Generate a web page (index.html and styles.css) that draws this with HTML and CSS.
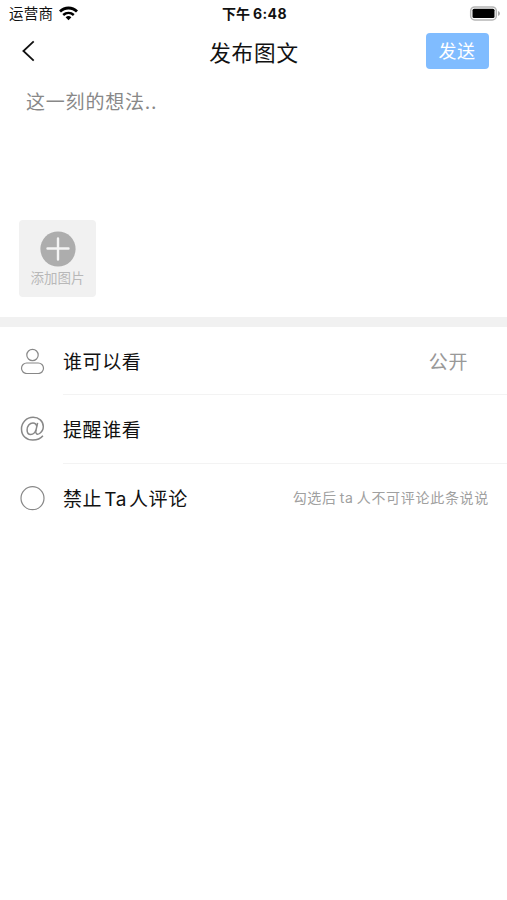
FILE: index.html
```
<!DOCTYPE html>
<html lang="zh-CN">
<head>
  <meta charset="UTF-8">
  <meta name="viewport" content="width=device-width, initial-scale=1">
  <title>发布图文</title>
  <link rel="stylesheet" href="styles.css">
</head>
<body>

  <div class="status">
    <div class="carrier">
      <span>运营商</span>
      <svg class="wifi" width="19" height="15" viewBox="0 0 19 15">
        <path d="M1 5.600C5.800.8 13.200.8 18 5.600" fill="none" stroke="#000" stroke-width="2.800"/>
        <path d="M4.200 9C7.300 6.200 11.700 6.200 14.800 9" fill="none" stroke="#000" stroke-width="2.500"/>
        <path d="M6.600 11.200Q9.500 8.900 12.400 11.200L9.500 14.200Z"/>
      </svg>
    </div>
    <div class="clock">下午<span>6:48</span></div>
    <svg class="battery" width="31" height="16" viewBox="0 0 31 16">
      <rect x="1.700" y=".900" width="25.600" height="13" rx="4" fill="#fff" stroke="#b5b5b5" stroke-width="1.500"/>
      <rect x="3.500" y="2.700" width="22" height="9.400" rx="1.500"/>
      <path d="M29 5Q31 5.700 31 7.400T29 9.900Z" fill="#aaa"/>
    </svg>
  </div>

  <header class="nav">
    <svg class="back" width="14" height="22" viewBox="0 0 14 22">
      <path d="M12.700 1.300L2.400 11L12.700 20.700" fill="none" stroke="#111" stroke-width="1.800"/>
    </svg>
    <h1>发布图文</h1>
    <button class="send">发送</button>
  </header>

  <div class="editor">
    <div class="placeholder">这一刻的想法..</div>
    <div class="add">
      <svg width="36" height="36" viewBox="0 0 36 36">
        <circle cx="18" cy="18" r="17.600" fill="#adadad"/>
        <path d="M18 7.500V28.500M7.500 17.500H28.500" stroke="#f4f4f4" stroke-width="2.400" stroke-linecap="round"/>
      </svg>
      <span>添加图片</span>
    </div>
  </div>

  <ul class="options">
    <li>
      <svg class="icon" width="26" height="26" viewBox="0 0 26 26">
        <circle cx="12.500" cy="7" r="5.700"/>
        <rect x="1.500" y="15" width="22" height="10.500" rx="5.250"/>
      </svg>
      <div class="cell">
        <span>谁可以看</span>
        <span class="value">公开</span>
      </div>
    </li>
    <li>
      <svg class="icon at" width="26" height="26" viewBox="0 0 26 26">
        <path d="M17.600 6.900L15.800 15.200C15.200 18.500 17.800 18.700 19.600 17.500C22.100 15.800 23.300 13.300 23.300 10.600C23.300 5 18.800 1.300 13.100 1.300C6.500 1.300 1.500 6.400 1.500 12.900C1.500 19.600 6.200 24 12.800 24C17 24 20.700 22.500 22.900 19.700"/>
        <path d="M16.700 10.400C16.300 8.100 15 6.900 13 6.900C9.500 6.900 7.100 10.400 7.100 13.900C7.100 16.700 8.500 18.400 10.700 18.400C13.200 18.400 15.200 16.300 15.900 13.900"/>
      </svg>
      <div class="cell">
        <span>提醒谁看</span>
      </div>
    </li>
    <li>
      <svg class="icon" width="26" height="26" viewBox="0 0 26 26">
        <circle cx="12.500" cy="13.200" r="11.500"/>
      </svg>
      <div class="cell">
        <span>禁止<span class="latin">Ta</span>人评论</span>
        <span class="hint">勾选后<span class="latin">ta</span>人不可评论此条说说</span>
      </div>
    </li>
  </ul>

</body>
</html>
```

FILE: styles.css
```
body {
  background: white;
  font-family: Inter, "Noto Sans CJK SC", sans-serif;
  margin: 0;
  color: #111;
}

.status {
  display: grid;
  grid-template-columns: 1fr auto 1fr;
  align-items: center;
  height: 27px;
  padding: 0 7px 0 9px;
}

.carrier {
  display: flex;
  align-items: center;
  gap: 6px;
  font-size: 14.5px;
  line-height: 26px;
  letter-spacing: 0.3px;
}

.wifi {
  margin-bottom: 1px;
}

.clock {
  font-size: 14px;
  font-weight: bold;
  line-height: 26px;
}

.clock span {
  margin-left: 3px;
  letter-spacing: 0.4px;
}

.battery {
  justify-self: end;
}

.nav {
  display: grid;
  grid-template-columns: 1fr auto 1fr;
  align-items: center;
  height: 48px;
  padding: 0 18px 0 21px;
}

h1 {
  margin: 3px 2px 0 0;
  font-size: 21.6px;
  font-weight: normal;
  line-height: 32px;
  letter-spacing: 0.8px;
}

.send {
  justify-self: end;
  width: 63px;
  height: 36px;
  padding: 0 1px 2px 0;
  border: none;
  border-radius: 4px;
  background: #80bcff;
  color: white;
  font-family: inherit;
  font-size: 18px;
  letter-spacing: 0.4px;
}

.editor {
  height: 242px;
  border-bottom: 10px solid #f1f1f1;
}

.placeholder {
  height: 132px;
  padding: 14px 26px 0;
  color: #888;
  font-size: 19px;
  line-height: 28px;
  letter-spacing: 0.8px;
  box-sizing: border-box;
}

.add {
  display: flex;
  flex-direction: column;
  align-items: center;
  width: 77px;
  height: 77px;
  margin: 13px 0 0 19px;
  padding-top: 11px;
  border-radius: 4px;
  background: #f1f1f1;
  color: #b8b8b8;
  font-size: 13.5px;
  line-height: 22px;
  box-sizing: border-box;
}

.options {
  list-style: none;
  margin: 0;
  padding: 0;
}

.options li {
  display: flex;
  align-items: center;
  height: 68.3px;
  padding-left: 20px;
}

.icon {
  margin-right: 17px;
  fill: none;
  stroke: #888;
  stroke-width: 1.2;
}

.at {
  stroke-width: 1.5;
}

.cell {
  display: flex;
  flex: 1;
  align-items: center;
  justify-content: space-between;
  height: 100%;
  padding-right: 18px;
  border-bottom: 1px solid #f3f3f3;
  box-sizing: border-box;
  font-size: 19px;
  letter-spacing: 0.6px;
}

.options li:last-child .cell {
  padding-bottom: 1px;
  border-bottom: none;
}

.value {
  margin-right: 21px;
  color: #999;
}

.hint {
  color: #a0a0a0;
  font-size: 14px;
  letter-spacing: 0.7px;
}

.latin {
  margin: 0 2px;
}

.hint .latin {
  margin: 0 3px;
}
```
